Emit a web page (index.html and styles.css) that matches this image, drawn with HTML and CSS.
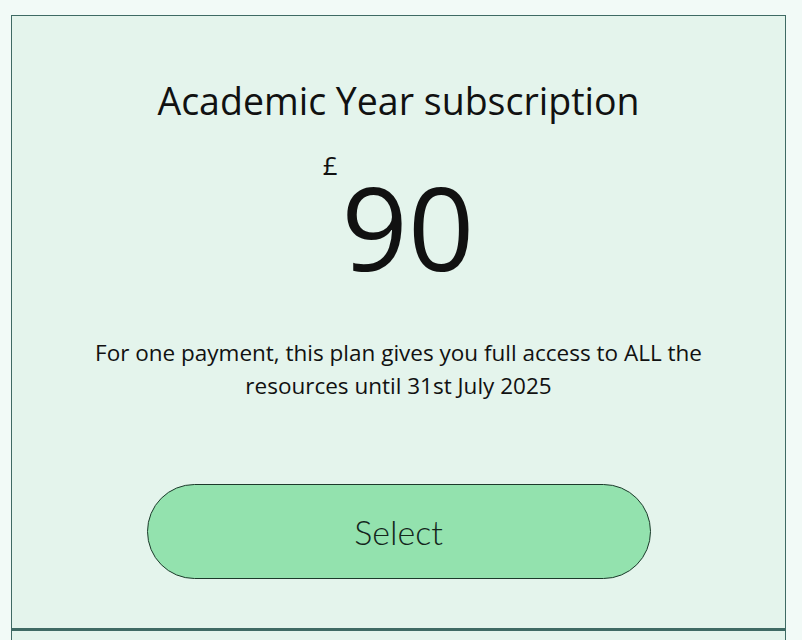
FILE: index.html
```html
<!DOCTYPE html>
<html lang="en">
<head>
  <meta charset="UTF-8" />
  <meta name="viewport" content="width=device-width, initial-scale=1.0"/>
  <title>Subscriptions</title>
  <link rel="stylesheet" href="styles.css">
</head>
<body>
  <div class="plans">
    <div class="plan">
      <h2 class="plan-title">Academic Year subscription</h2>
      <div class="price">
        <span class="currency">£</span>
        <span class="amount">90</span>
      </div>
      <p class="plan-desc">For one payment, this plan gives you full access to ALL the resources until 31st July 2025</p>
      <button class="select-btn">Select</button>
    </div>
    <div class="plan"></div>
  </div>
</body>
</html>
```

FILE: styles.css
```css
body {
  margin: 0;
  background-color: #f2faf7;
  font-family: 'Open Sans', sans-serif;
  color: #111;
}

.plans {
  padding: 15px 16px 0 11px;
  display: flex;
  flex-direction: column;
}

.plan {
  background-color: #e4f4ec;
  border: 1px solid #3f6a64;
  height: 614px;
  display: flex;
  flex-direction: column;
  align-items: center;
  box-sizing: border-box;
}

.plan + .plan {
  border-top-width: 2px;
}

.plan-title {
  margin: 61px 0 0;
  font-size: 37.5px;
  font-weight: normal;
  line-height: 48px;
}

.price {
  display: flex;
  align-items: flex-start;
  margin-top: 26px;
}

.currency {
  font-size: 26px;
  line-height: 28px;
  margin-right: 4px;
}

.amount {
  font-size: 116px;
  line-height: 110px;
  margin-top: 20px;
}

.plan-desc {
  margin: 55px 0 0;
  max-width: 660px;
  text-align: center;
  font-size: 22.5px;
  line-height: 33px;
}

.select-btn {
  margin-top: 82px;
  width: 504px;
  height: 95px;
  background-color: #93e2ae;
  border: 1px solid #1c3a2b;
  border-radius: 48px;
  font-family: 'Lato', sans-serif;
  font-size: 34px;
  font-weight: 300;
  color: #14261c;
  cursor: pointer;
}
```
